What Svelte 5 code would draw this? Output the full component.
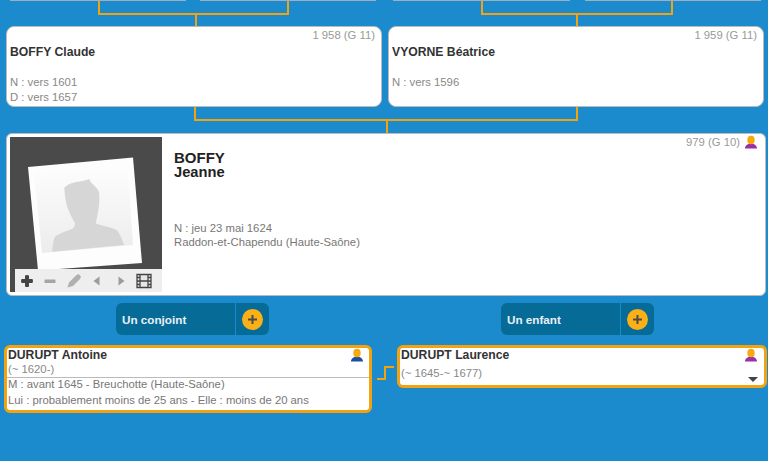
<script lang="ts">
  const parents = [
    { sosa: '1 958 (G 11)', name: 'BOFFY Claude', facts: ['N : vers 1601', 'D : vers 1657'] },
    { sosa: '1 959 (G 11)', name: 'VYORNE Béatrice', facts: ['N : vers 1596'] }
  ];
</script>

{#snippet person(color: string)}
  <svg class="person" viewBox="0 0 14 14" width="14" height="14">
    <path d="M1 13.500 C1 10 4 9.500 5.500 8.500 L8.500 8.500 C10 9.500 13 10 13 13.500 Z" fill={color} />
    <ellipse cx="7" cy="5" rx="3.700" ry="4.300" fill="#f7a90d" />
  </svg>
{/snippet}

{#snippet plus()}
  <span class="plus">
    <svg viewBox="0 0 21 21" width="21" height="21">
      <path d="M10.500 6v9M6 10.500h9" stroke="#4a4a4a" stroke-width="2" />
    </svg>
  </span>
{/snippet}

<div class="page">
  <div class="stubs">
    <div class="stub"></div>
    <div class="stub"></div>
    <div class="stub"></div>
    <div class="stub"></div>
  </div>

  <div class="parents">
    {#each parents as p}
      <div class="parent">
        <div class="bracket"></div>
        <div class="stem"></div>
        <div class="card">
          <div class="sosa">{p.sosa}</div>
          <div class="name">{p.name}</div>
          <div class="facts">
            {#each p.facts as f}
              <div>{f}</div>
            {/each}
          </div>
        </div>
      </div>
    {/each}
  </div>

  <div class="link-down"></div>
  <div class="link-stem"></div>

  <div class="main">
    <div class="photo">
      <svg viewBox="0 0 152 155" width="152" height="155">
        <defs>
          <linearGradient id="paper" x1="0" y1="0" x2="0" y2="1">
            <stop offset="0" stop-color="#fefefe" />
            <stop offset="1" stop-color="#ececec" />
          </linearGradient>
        </defs>
        <polygon points="18,30 123,20.500 132,126 28,133.500" fill="#fdfdfd" />
        <polygon points="24,34 117,25 123,108 32,116" fill="url(#paper)" />
        <path d="M54.300 50.700 C58 47 61 46.500 65 45.300 C69 44.500 73 44 76.700 43 L79 42 L81.700 46.300 C85 49 87.500 52 89 54.700 C89.500 59 89.500 63 89 68 C88.500 74 87 80 85.700 86.300 C91 89 101 90 106.700 93 C110 97 112.500 103 114 108 L42.300 114.700 C42.500 109 43 104 45 99.700 C50 96 58 94 63.300 91.300 C64.500 89.500 65 88 65 86.300 C61.500 80 58.500 74 56.700 68 C55.300 62 54.500 56 54.300 50.700 Z" fill="#d6d6d6" />
      </svg>
      <div class="tools">
        <span class="tool"><svg viewBox="0 0 14 14" width="14" height="14"><path d="M5 1.500q2-1 4 0v3.500h3.500q1 2 0 4H9v3.500q-2 1-4 0V9H1.500q-1-2 0-4H5z" fill="#444" /></svg></span>
        <span class="tool"><svg viewBox="0 0 14 14" width="14" height="14"><rect x="1.500" y="5.500" width="11" height="3.500" rx="0.500" fill="#a5a5a5" /></svg></span>
        <span class="tool"><svg viewBox="0 0 14 14" width="14" height="14"><path d="M0.500 13.500l1.500-5L9.500 1l2-1 2.500 2.500-1 2.500-7 7z" fill="#b0b0b0" /></svg></span>
        <span class="tool"><svg viewBox="0 0 14 14" width="14" height="14"><path d="M9.500 2.500v9L3.500 7z" fill="#9c9c9c" /></svg></span>
        <span class="tool"><svg viewBox="0 0 14 14" width="14" height="14"><path d="M4.500 2.500v9l6-4.500z" fill="#9c9c9c" /></svg></span>
        <span class="tool"><svg viewBox="0 0 16 16" width="16" height="16"><path d="M1 1.500h14v13H1zM4 1.500v13M12 1.500v13M4 8h8M1 4.500h3M1 8h3M1 11.500h3M12 4.500h3M12 8h3M12 11.500h3" fill="#e6e6e6" stroke="#444" stroke-width="1.300" /></svg></span>
      </div>
    </div>
    <div class="info">
      <div class="surname">BOFFY</div>
      <div class="firstname">Jeanne</div>
      <div class="birth">
        <div>N : jeu 23 mai 1624</div>
        <div>Raddon-et-Chapendu (Haute-Saône)</div>
      </div>
    </div>
    <div class="sosa main-sosa">979 (G 10) {@render person('#9a2fa8')}</div>
  </div>

  <div class="actions">
    <div class="action">
      <span class="action-label">Un conjoint</span>
      <span class="action-add">{@render plus()}</span>
    </div>
    <div class="action">
      <span class="action-label">Un enfant</span>
      <span class="action-add">{@render plus()}</span>
    </div>
  </div>

  <div class="relations">
    <div class="rel spouse">
      <div class="rel-head">
        <div class="rel-name">DURUPT Antoine</div>
        <div class="rel-dates">(~ 1620-)</div>
        {@render person('#1d4fa0')}
      </div>
      <div class="rel-union">
        <div>M : avant 1645 - Breuchotte (Haute-Saône)</div>
        <div>Lui : probablement moins de 25 ans - Elle : moins de 20 ans</div>
      </div>
    </div>
    <svg class="step" viewBox="0 0 17 14" width="17" height="14">
      <path d="M0 13h8V1h9" fill="none" stroke="#f2a30f" stroke-width="2" />
    </svg>
    <div class="rel child">
      <div class="rel-name">DURUPT Laurence</div>
      <div class="rel-dates">(~ 1645-~ 1677)</div>
      {@render person('#9a2fa8')}
      <span class="caret"></span>
    </div>
  </div>
</div>

<style>
  :global(body) {
    margin: 0;
  }

  .page {
    width: 768px;
    height: 461px;
    overflow: hidden;
    background: #1b8bcd;
    font-family: 'Liberation Sans', Arial, sans-serif;
    font-size: 11.300px;
    color: #888;
  }

  .stubs {
    display: flex;
    gap: 14px;
    height: 1px;
    padding-left: 10px;
  }

  .stub {
    width: 176px;
    background: #9db0bc;
  }

  .stub:nth-child(3) {
    width: 177px;
    margin-left: 3px;
  }

  .stub:nth-child(4) {
    margin-left: 1px;
  }

  .parents {
    display: flex;
    gap: 6px;
    padding-left: 6px;
  }

  .parent {
    width: 376px;
  }

  .bracket {
    box-sizing: border-box;
    width: 191px;
    height: 14px;
    margin-left: 92px;
    border: 2px solid #f2a30f;
    border-top: 0;
  }

  .parent:nth-child(2) .bracket {
    width: 192px;
    margin-left: 93px;
  }

  .stem {
    width: 2px;
    height: 11px;
    margin-left: 189px;
    background: #f2a30f;
  }

  .parent:nth-child(2) .stem {
    margin-left: 188px;
  }

  .card {
    position: relative;
    box-sizing: border-box;
    height: 81px;
    padding: 18px 3px 0;
    background: #fff;
    border: 1px solid #bbb;
    border-radius: 8px;
  }

  .sosa {
    position: absolute;
    top: 2px;
    right: 6px;
    display: flex;
    align-items: center;
    gap: 4px;
    color: #999;
  }

  .name {
    font-size: 12.200px;
    font-weight: bold;
    color: #333;
  }

  .facts {
    margin-top: 16px;
    line-height: 15px;
  }

  .link-down {
    box-sizing: border-box;
    width: 384px;
    height: 14px;
    margin-left: 194px;
    border: 2px solid #f2a30f;
    border-top: 0;
  }

  .link-stem {
    width: 2px;
    height: 12px;
    margin-left: 386px;
    background: #f2a30f;
  }

  .main {
    position: relative;
    box-sizing: border-box;
    display: flex;
    width: 760px;
    height: 163px;
    margin-left: 6px;
    padding: 3px;
    background: #fff;
    border: 1px solid #bbb;
    border-radius: 6px;
  }

  .photo {
    position: relative;
    width: 152px;
    height: 155px;
    background: #4a4a4a;
  }

  .photo > svg {
    display: block;
  }

  .tools {
    position: absolute;
    left: 5px;
    right: 0;
    bottom: 0;
    height: 23px;
    display: grid;
    grid-template-columns: repeat(6, 23.500px);
    align-items: center;
    background: #eee;
  }

  .tool {
    display: flex;
    justify-content: center;
  }

  .info {
    padding: 14px 0 0 12px;
  }

  .surname {
    font-size: 15px;
    line-height: 14px;
    font-weight: bold;
    color: #222;
  }

  .firstname {
    font-size: 14.700px;
    line-height: 15px;
    font-weight: bold;
    color: #222;
  }

  .birth {
    margin-top: 41px;
    line-height: 14px;
    color: #777;
  }

  .main-sosa {
    top: 1px;
    right: 7px;
  }

  .actions {
    display: flex;
    gap: 232px;
    margin: 7px 0 10px 116px;
  }

  .action {
    display: flex;
    width: 153px;
    height: 32px;
    background: #076b98;
    border-radius: 6px;
    overflow: hidden;
  }

  .action-label {
    box-sizing: border-box;
    width: 120px;
    padding-left: 6px;
    font-size: 11.700px;
    line-height: 34px;
    font-weight: bold;
    color: #e8f1f5;
    border-right: 1px solid #1b8bcd;
  }

  .action-add {
    flex: 1;
    display: flex;
    align-items: center;
    justify-content: center;
  }

  .plus {
    display: flex;
    width: 21px;
    height: 21px;
    background: #fbb017;
    border-radius: 50%;
  }

  .relations {
    display: flex;
    align-items: flex-start;
    padding-left: 4px;
  }

  .rel {
    position: relative;
    box-sizing: border-box;
    background: #fff;
    border: 3px solid #f2a30f;
    border-radius: 6px;
    line-height: 15px;
  }

  .spouse {
    width: 368px;
    height: 68px;
  }

  .child {
    width: 370px;
    height: 43px;
    padding: 0 1px;
  }

  .rel-head {
    padding: 0 1px;
    height: 29px;
    border-bottom: 1px solid #bbb;
  }

  .rel-name {
    font-size: 12.200px;
    font-weight: bold;
    color: #333;
  }

  .rel-dates {
    margin-top: -1px;
    color: #888;
  }

  .child .rel-dates {
    margin-top: 3px;
  }

  .rel-union {
    margin-top: -1px;
    padding: 0 1px;
    line-height: 15.500px;
    color: #777;
  }

  .step {
    flex: none;
    margin: 21px 3px 0 5px;
  }

  .person {
    display: block;
  }

  .rel .person {
    position: absolute;
    top: 0;
    right: 5px;
  }

  .child .person {
    right: 6px;
  }

  .caret {
    position: absolute;
    right: 6px;
    bottom: 3px;
    width: 0;
    height: 0;
    border: 5px solid transparent;
    border-top: 5px solid #444;
    border-bottom: 0;
  }
</style>
